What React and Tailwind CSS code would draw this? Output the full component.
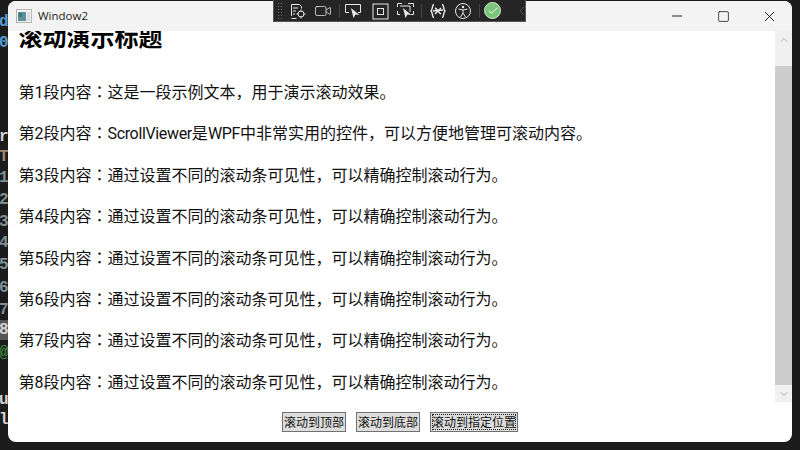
import { Minus, Square, X, ChevronUp, ChevronDown, ChevronLeft, Video, Check } from 'lucide-react';

const cjk = 'font-["Noto_Sans_CJK_SC","Liberation_Sans",sans-serif]';

const paragraphs = [
  ['第1段内容', '这是一段示例文本，用于演示滚动效果。'],
  ['第2段内容', <><span className="tracking-[-0.35px]">ScrollViewer</span>是<span className="tracking-[-0.3px]">WPF</span>中非常实用的控件，可以方便地管理可滚动内容。</>],
  ['第3段内容', '通过设置不同的滚动条可见性，可以精确控制滚动行为。'],
  ['第4段内容', '通过设置不同的滚动条可见性，可以精确控制滚动行为。'],
  ['第5段内容', '通过设置不同的滚动条可见性，可以精确控制滚动行为。'],
  ['第6段内容', '通过设置不同的滚动条可见性，可以精确控制滚动行为。'],
  ['第7段内容', '通过设置不同的滚动条可见性，可以精确控制滚动行为。'],
  ['第8段内容', '通过设置不同的滚动条可见性，可以精确控制滚动行为。'],
];

// editor text peeking out on the left of the window
const gutter = [
  { y: 12, t: 'd', c: 'text-[#569cd6]' },
  { y: 33, t: '0', c: 'text-[#569cd6]' },
  { y: 127, t: 'r', c: 'text-[#d4d4d4]' },
  { y: 147, t: 'T', c: 'text-[#a08a70]' },
  { y: 168, t: '1', c: 'text-[#7f8f95]' },
  { y: 190, t: '2', c: 'text-[#7f8f95]' },
  { y: 212, t: '3', c: 'text-[#7f8f95]' },
  { y: 233, t: '4', c: 'text-[#7f8f95]' },
  { y: 255, t: '5', c: 'text-[#7f8f95]' },
  { y: 278, t: '6', c: 'text-[#7f8f95]' },
  { y: 300, t: '7', c: 'text-[#7f8f95]' },
  { y: 320, t: '8', c: 'text-[#d4d4d4] bg-[#555]' },
  { y: 343, t: '@', c: 'text-[#3f8a3f]' },
  { y: 390, t: 'u', c: 'text-[#d4d4d4]' },
  { y: 410, t: 'l', c: 'text-[#d4d4d4]' },
];

function ToolIcon({ children, w = 18 }) {
  return (
    <svg width={w} height="18" viewBox={`0 0 ${w} 18`} fill="none" stroke="#e8e8e8" strokeWidth="1" className="shrink-0">
      {children}
    </svg>
  );
}

function Divider() {
  return <div className="w-px h-[14px] bg-[#444] shrink-0" />;
}

function Toolbar() {
  return (
    <div className="absolute left-[273px] top-0 w-[253px] h-[22px] bg-[#252525] border border-[#555] border-t-0 flex items-center z-10">
      <div className="w-[5px] h-[18px] ml-[3px] bg-[radial-gradient(#777_1px,transparent_1px)] bg-[length:3px_3px] shrink-0" />
      <div className="ml-[7px]">
        <ToolIcon w={18}>
          <path d="M2.5 14V2.5h8l2 2v2M4 6h5M4 9h3M4 12h2M2.5 16.5h5" />
          <circle cx="12" cy="12" r="3" />
          <path d="M12 7.5v2M12 14.5v2M7.5 12h2M14.5 12h2" />
        </ToolIcon>
      </div>
      <Video size={18} color="#e8e8e8" strokeWidth={1} className="ml-[7px] shrink-0" />
      <div className="ml-[7px]"><Divider /></div>
      <div className="ml-[5px]">
        <ToolIcon w={17}>
          <path d="M4 10.5H.5V2.5h15v8H13" />
          <path d="M6 6l2.5 10 2-3.5 4 .5z" fill="#e8e8e8" stroke="none" />
        </ToolIcon>
      </div>
      <div className="ml-[10px]">
        <ToolIcon w={17}>
          <rect x="1" y="2" width="15" height="15" />
          <rect x="5.5" y="6.5" width="6" height="6" />
        </ToolIcon>
      </div>
      <div className="ml-[8px]">
        <ToolIcon w={17}>
          <path d="M.5 5V1.5H5M11 1.5h5.500V5M.5 9v3.5H3M16.5 9v3.5H14M3 4h10v6" />
          <path d="M6 6l2.5 10 2-3.5 4 .5z" fill="#e8e8e8" stroke="none" />
        </ToolIcon>
      </div>
      <div className="ml-[7px]"><Divider /></div>
      <div className="ml-[8px]">
        <ToolIcon w={16}>
          <path d="M4 2.5C2 2.5 3 7 1 9c2 2 1 6.5 3 6.5M12 2.5c2 0 1 4.5 3 6.5-2 2-1 6.5-3 6.5" strokeWidth="1.4" />
          <path d="M5 12l6-6M5 6c2 1 4 5 6 6" strokeWidth="1.4" />
          <path d="M3 9l10-1" strokeWidth="1.4" />
        </ToolIcon>
      </div>
      <div className="ml-[9px]">
        <ToolIcon w={16}>
          <circle cx="8" cy="9" r="7.5" />
          <circle cx="8" cy="5" r="1.2" fill="#e8e8e8" stroke="none" />
          <path d="M3.5 7L8 8l4.5-1M8 8v3M8 11l-2.5 4M8 11l2.5 4" />
        </ToolIcon>
      </div>
      <div className="ml-[8px]"><Divider /></div>
      <div className="ml-[4px] w-[17px] h-[17px] rounded-full bg-[#7cc47a] border border-[#d5ecd0] flex items-center justify-center shrink-0">
        <Check size={12} color="#fff" strokeWidth={2} />
      </div>
      <ChevronLeft size={16} color="#666" strokeWidth={1} className="ml-[13px] shrink-0" />
    </div>
  );
}

function Scrollbar() {
  return (
    <div className="w-[17px] shrink-0 bg-[#f0f0f0] flex flex-col">
      <div className="h-[35px] flex justify-center pt-[3px]">
        <ChevronUp size={12} color="#b4b4b4" strokeWidth={2} />
      </div>
      <div className="h-[319px] bg-[#cdcdcd]" />
      <div className="h-[17px] flex items-center justify-center">
        <ChevronDown size={12} color="#a8a8a8" strokeWidth={2} />
      </div>
    </div>
  );
}

function WinButton({ children, focused, w }) {
  return (
    <button className={`${w} h-[20px] shrink-0 bg-[#dddddd] border border-[#707070] text-[12px] leading-none text-[#111] flex items-center justify-center ${focused ? 'outline-1 outline-dotted outline-[#222] -outline-offset-3' : ''}`}>
      {children}
    </button>
  );
}

export default function App() {
  return (
    <div className={`relative w-[800px] h-[450px] overflow-hidden bg-[#1c1c1c] ${cjk}`}>
      {gutter.map((g) => (
        <span
          key={g.y}
          style={{ top: g.y }}
          className={`absolute -left-[1px] w-[9px] h-[20px] overflow-hidden text-[16px] leading-[20px] font-bold font-['Liberation_Mono',monospace] ${g.c}`}
        >
          {g.t}
        </span>
      ))}

      <Toolbar />

      {/* window */}
      <div className="absolute left-[8px] top-[1px] w-[784px] h-[441px] rounded-lg overflow-hidden bg-white flex flex-col">
        <header className="h-[30px] shrink-0 bg-[#f3f3f3] flex items-center">
          <svg width="16" height="16" viewBox="0 0 16 16" className="ml-[8px] shrink-0">
            <rect x="0.5" y="1.5" width="15" height="13" fill="#f5f5f5" stroke="#b5b5b5" />
            <rect x="2" y="4" width="8" height="9" fill="#5f8f9a" />
            <rect x="3" y="5" width="3" height="4" fill="#2f7f70" />
            <rect x="11" y="4" width="3" height="9" fill="#d8dee0" />
          </svg>
          <span className="ml-[6px] text-[11.5px] text-[#222] font-['Open_Sans',sans-serif]">Window2</span>
          <div className="ml-auto flex items-center">
            <div className="w-[46px] flex justify-center"><Minus size={16} color="#000" strokeWidth={1.3} /></div>
            <div className="w-[46px] flex justify-center"><Square size={13} color="#000" strokeWidth={1.3} /></div>
            <div className="w-[46px] flex justify-center"><X size={17} color="#000" strokeWidth={1.2} /></div>
          </div>
        </header>

        <div className="h-[371px] shrink-0 flex">
          <div className="flex-1 overflow-hidden pl-[10.5px] text-[#111]">
            <h1 className="-mt-[11px] h-[32px] text-[24px] leading-[32px] font-bold text-black">滚动演示标题</h1>
            <div className="mt-[27px] flex flex-col gap-[17.4px] font-['Roboto','Noto_Sans_CJK_SC',sans-serif]">
              {paragraphs.map(([head, rest]) => (
                <p key={head} className="h-[24px] text-[16px] leading-[24px] whitespace-nowrap">
                  {head}
                  <span className="font-['Noto_Sans_CJK_JP',sans-serif]">：</span>
                  {rest}
                </p>
              ))}
            </div>
          </div>
          <Scrollbar />
        </div>

        <div className="flex justify-center gap-[10px] pt-[10px]">
          <WinButton w="w-[64px]">滚动到顶部</WinButton>
          <WinButton w="w-[64px]">滚动到底部</WinButton>
          <WinButton w="w-[88px]" focused>滚动到指定位置</WinButton>
        </div>
      </div>
    </div>
  );
}
